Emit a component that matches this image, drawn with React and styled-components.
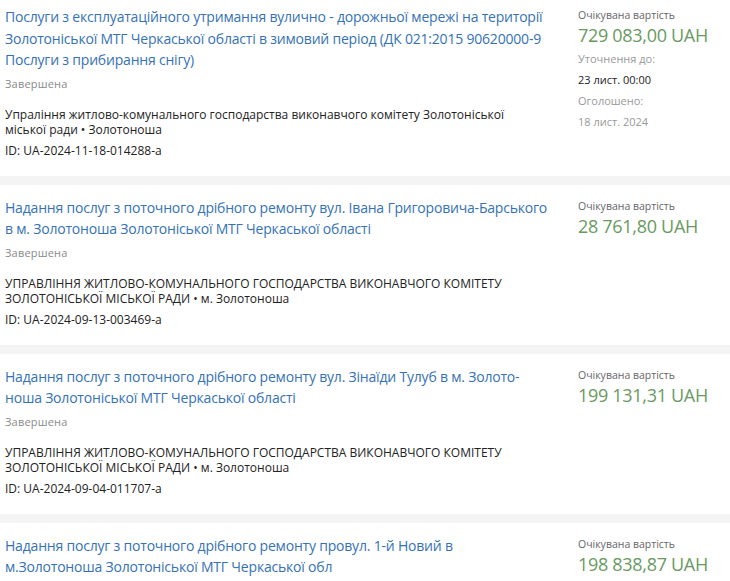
import React from "react";
import styled, { createGlobalStyle } from "styled-components";

const GlobalStyle = createGlobalStyle`
  body {
    margin: 0;
    background: #f4f4f4;
    font-family: "Open Sans", "Liberation Sans", sans-serif;
    overflow: hidden;
  }
`;

const List = styled.div`
  display: flex;
  flex-direction: column;
  gap: 9px;
  margin-top: -6px;
`;

const Card = styled.div`
  background: #fff;
  display: grid;
  grid-template-columns: 545px 1fr;
  column-gap: 28px;
  padding: 12px 5px 17px 5px;
`;

const Main = styled.div`
  display: flex;
  flex-direction: column;
`;

const Title = styled.a`
  font-size: 14px;
  line-height: 21.5px;
  letter-spacing: -0.2px;
  color: #3572b5;
  text-decoration: none;
  white-space: nowrap;
`;

const Status = styled.div`
  margin-top: 5px;
  font-size: 11px;
  line-height: 16px;
  letter-spacing: 0.2px;
  color: #8a8a8a;
`;

const Org = styled.div`
  max-width: 520px;
  margin-top: 15px;
  font-size: 12px;
  line-height: 15px;
  color: #222;
`;

const Id = styled.div`
  margin-top: 6px;
  font-size: 12px;
  line-height: 16px;
  color: #222;
`;

const Side = styled.div`
  display: flex;
  flex-direction: column;
  padding-top: 1px;
`;

const Label = styled.div`
  font-size: 10.5px;
  line-height: 16px;
  color: #666;
`;

const Price = styled.div`
  font-size: 18px;
  line-height: 24px;
  letter-spacing: -0.3px;
  color: #6a9a62;
`;

const Meta = styled.div`
  font-size: 11px;
  line-height: 21px;
  color: ${(p) => (p.$dark ? "#222" : "#999")};
`;

const MetaBlock = styled.div`
  display: flex;
  flex-direction: column;
  margin-top: 1px;
`;

const tenders = [
  {
    title: [
      "Послуги з експлуатаційного утримання вулично - дорожньої мережі на території",
      "Золотоніської МТГ Черкаської області в зимовий період (ДК 021:2015 90620000-9",
      "Послуги з прибирання снігу)",
    ],
    org: "Упраління житлово-комунального господарства виконавчого комітету Золотоніської міської ради • Золотоноша",
    id: "UA-2024-11-18-014288-a",
    price: "729 083,00 UAH",
    meta: [
      ["Уточнення до:", false],
      ["23 лист. 00:00", true],
      ["Оголошено:", false],
      ["18 лист. 2024", false],
    ],
  },
  {
    title: [
      "Надання послуг з поточного дрібного ремонту вул. Івана Григоровича-Барського",
      "в м. Золотоноша Золотоніської МТГ Черкаської області",
    ],
    org: "УПРАВЛІННЯ ЖИТЛОВО-КОМУНАЛЬНОГО ГОСПОДАРСТВА ВИКОНАВЧОГО КОМІТЕТУ ЗОЛОТОНІСЬКОЇ МІСЬКОЇ РАДИ • м. Золотоноша",
    id: "UA-2024-09-13-003469-a",
    price: "28 761,80 UAH",
  },
  {
    title: [
      "Надання послуг з поточного дрібного ремонту вул. Зінаїди Тулуб в м. Золото-",
      "ноша Золотоніської МТГ Черкаської області",
    ],
    org: "УПРАВЛІННЯ ЖИТЛОВО-КОМУНАЛЬНОГО ГОСПОДАРСТВА ВИКОНАВЧОГО КОМІТЕТУ ЗОЛОТОНІСЬКОЇ МІСЬКОЇ РАДИ • м. Золотоноша",
    id: "UA-2024-09-04-011707-a",
    price: "199 131,31 UAH",
  },
  {
    title: [
      "Надання послуг з поточного дрібного ремонту провул. 1-й Новий в",
      "м.Золотоноша Золотоніської МТГ Черкаської обл",
    ],
    org: "УПРАВЛІННЯ ЖИТЛОВО-КОМУНАЛЬНОГО ГОСПОДАРСТВА ВИКОНАВЧОГО КОМІТЕТУ ЗОЛОТОНІСЬКОЇ МІСЬКОЇ РАДИ • м. Золотоноша",
    id: "UA-2024-08-20-000000-a",
    price: "198 838,87 UAH",
  },
];

export default function App() {
  return (
    <>
      <GlobalStyle />
      <List>
        {tenders.map((t) => (
          <Card key={t.price}>
            <Main>
              <Title href="#">
                {t.title.map((line, i) => (
                  <React.Fragment key={i}>
                    {i > 0 && <br />}
                    {line}
                  </React.Fragment>
                ))}
              </Title>
              <Status>Завершена</Status>
              <Org>{t.org}</Org>
              <Id>ID: {t.id}</Id>
            </Main>
            <Side>
              <Label>Очікувана вартість</Label>
              <Price>{t.price}</Price>
              {t.meta && (
                <MetaBlock>
                  {t.meta.map(([text, dark]) => (
                    <Meta key={text} $dark={dark}>
                      {text}
                    </Meta>
                  ))}
                </MetaBlock>
              )}
            </Side>
          </Card>
        ))}
      </List>
    </>
  );
}
